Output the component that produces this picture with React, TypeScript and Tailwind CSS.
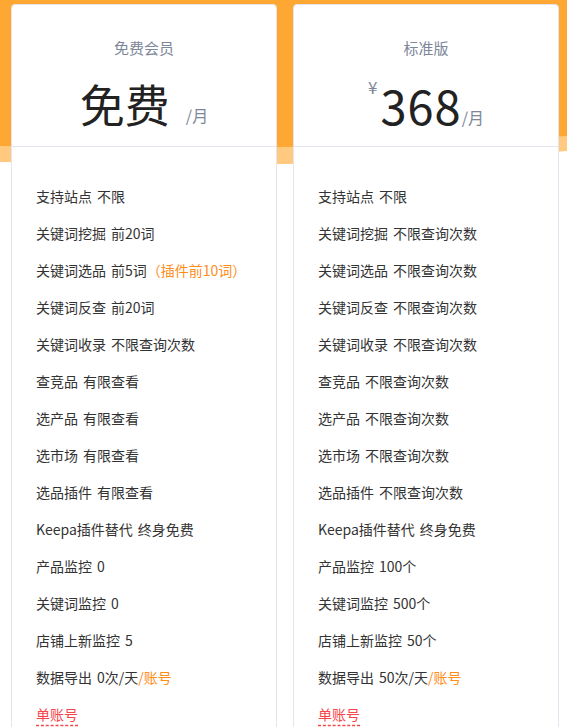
import React from 'react';

type Feature = { label: string; value: string; extra?: string };

interface Plan {
  name: string;
  price: string;
  currency?: boolean;
  features: Feature[];
}

const plans: Plan[] = [
  {
    name: '免费会员',
    price: '免费',
    features: [
      { label: '支持站点', value: '不限' },
      { label: '关键词挖掘', value: '前20词' },
      { label: '关键词选品', value: '前5词', extra: '（插件前10词）' },
      { label: '关键词反查', value: '前20词' },
      { label: '关键词收录', value: '不限查询次数' },
      { label: '查竞品', value: '有限查看' },
      { label: '选产品', value: '有限查看' },
      { label: '选市场', value: '有限查看' },
      { label: '选品插件', value: '有限查看' },
      { label: 'Keepa插件替代', value: '终身免费' },
      { label: '产品监控', value: '0' },
      { label: '关键词监控', value: '0' },
      { label: '店铺上新监控', value: '5' },
      { label: '数据导出', value: '0次/天', extra: '/账号' },
    ],
  },
  {
    name: '标准版',
    price: '368',
    currency: true,
    features: [
      { label: '支持站点', value: '不限' },
      { label: '关键词挖掘', value: '不限查询次数' },
      { label: '关键词选品', value: '不限查询次数' },
      { label: '关键词反查', value: '不限查询次数' },
      { label: '关键词收录', value: '不限查询次数' },
      { label: '查竞品', value: '不限查询次数' },
      { label: '选产品', value: '不限查询次数' },
      { label: '选市场', value: '不限查询次数' },
      { label: '选品插件', value: '不限查询次数' },
      { label: 'Keepa插件替代', value: '终身免费' },
      { label: '产品监控', value: '100个' },
      { label: '关键词监控', value: '500个' },
      { label: '店铺上新监控', value: '50个' },
      { label: '数据导出', value: '50次/天', extra: '/账号' },
    ],
  },
];

const PlanCard: React.FC<{ plan: Plan }> = ({ plan }) => (
  <div className="w-[266px] bg-white border border-[#e4e4ef] rounded-[4px]">
    {/* header */}
    <div className="h-[142px] border-b border-[#e4e4ef] pt-[33px] flex flex-col items-center">
      <div className="text-[15px] leading-[20px] text-[#7d8799]">{plan.name}</div>
      {plan.currency ? (
        <div className="mt-[23px] flex items-end">
          <span className="text-[17px] leading-none text-[#7d8799] self-start -mt-[3px] mr-[3px]">¥</span>
          <span className="text-[47px] leading-none text-[#222] tracking-[1px]">{plan.price}</span>
          <span className="text-[16px] leading-[20px] text-[#7d8799] mb-[1px]">/月</span>
        </div>
      ) : (
        <div className="mt-[23px] flex items-end">
          <span className="text-[45px] leading-none text-[#222]">{plan.price}</span>
          <span className="text-[16px] leading-[20px] text-[#7d8799] ml-[16px] mb-[1px]">/月</span>
        </div>
      )}
    </div>

    {/* features */}
    <ul className="pt-[31px] pl-[24px] pr-[10px] text-[14px] text-[#333]">
      {plan.features.map((f) => (
        <li key={f.label} className="h-[37px] leading-[37px] whitespace-nowrap">
          {f.label}
          <span className="ml-[5px]">{f.value}</span>
          {f.extra && <span className="text-[#ff8d1a]">{f.extra}</span>}
        </li>
      ))}
      <li className="h-[37px] leading-[37px]">
        <span className="text-[#f5474a] underline decoration-dashed decoration-[#f5474a] underline-offset-[5px]">单账号</span>
      </li>
    </ul>
  </div>
);

export default function App() {
  return (
    <div
      className="relative w-[567px] min-h-[727px] bg-white overflow-hidden"
      style={{ fontFamily: '"Noto Sans CJK SC", "Noto Sans", sans-serif' }}
    >
      {/* orange wave backdrop */}
      <svg className="absolute left-0 top-0" width="567" height="170" viewBox="0 0 567 170">
        <path d="M0 0 H567 V151 Q420 162 285 164 Q140 165 0 162 Z" fill="#ffc97f" />
        <path d="M0 0 H567 V136 Q420 145 285 147 Q140 148 0 146 Z" fill="#ffa733" />
      </svg>

      <div className="relative flex gap-[16px] pl-[11px] pt-[4px]">
        {plans.map((p) => (
          <PlanCard key={p.name} plan={p} />
        ))}
      </div>
    </div>
  );
}
